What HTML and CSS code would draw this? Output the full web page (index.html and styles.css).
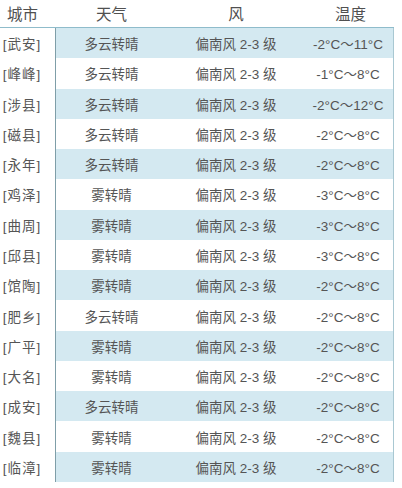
FILE: index.html
```html
<!DOCTYPE html>
<html lang="zh-CN">
<head>
<meta charset="utf-8">
<link rel="stylesheet" href="styles.css">
</head>
<body>
<div class="table">
  <div class="row head">
    <div class="c city">城市</div>
    <div class="c wea">天气</div>
    <div class="c wind">风</div>
    <div class="c temp">温度</div>
  </div>
  <div class="body">
    <div class="row alt"><div class="c city">[武安]</div><div class="c wea">多云转晴</div><div class="c wind">偏南风 2-3 级</div><div class="c temp">-2°C～11°C</div></div>
    <div class="row"><div class="c city">[峰峰]</div><div class="c wea">多云转晴</div><div class="c wind">偏南风 2-3 级</div><div class="c temp">-1°C～8°C</div></div>
    <div class="row alt"><div class="c city">[涉县]</div><div class="c wea">多云转晴</div><div class="c wind">偏南风 2-3 级</div><div class="c temp">-2°C～12°C</div></div>
    <div class="row"><div class="c city">[磁县]</div><div class="c wea">多云转晴</div><div class="c wind">偏南风 2-3 级</div><div class="c temp">-2°C～8°C</div></div>
    <div class="row alt"><div class="c city">[永年]</div><div class="c wea">多云转晴</div><div class="c wind">偏南风 2-3 级</div><div class="c temp">-2°C～8°C</div></div>
    <div class="row"><div class="c city">[鸡泽]</div><div class="c wea">雾转晴</div><div class="c wind">偏南风 2-3 级</div><div class="c temp">-3°C～8°C</div></div>
    <div class="row alt"><div class="c city">[曲周]</div><div class="c wea">雾转晴</div><div class="c wind">偏南风 2-3 级</div><div class="c temp">-3°C～8°C</div></div>
    <div class="row"><div class="c city">[邱县]</div><div class="c wea">雾转晴</div><div class="c wind">偏南风 2-3 级</div><div class="c temp">-3°C～8°C</div></div>
    <div class="row alt"><div class="c city">[馆陶]</div><div class="c wea">雾转晴</div><div class="c wind">偏南风 2-3 级</div><div class="c temp">-2°C～8°C</div></div>
    <div class="row"><div class="c city">[肥乡]</div><div class="c wea">多云转晴</div><div class="c wind">偏南风 2-3 级</div><div class="c temp">-2°C～8°C</div></div>
    <div class="row alt"><div class="c city">[广平]</div><div class="c wea">雾转晴</div><div class="c wind">偏南风 2-3 级</div><div class="c temp">-2°C～8°C</div></div>
    <div class="row"><div class="c city">[大名]</div><div class="c wea">雾转晴</div><div class="c wind">偏南风 2-3 级</div><div class="c temp">-2°C～8°C</div></div>
    <div class="row alt"><div class="c city">[成安]</div><div class="c wea">多云转晴</div><div class="c wind">偏南风 2-3 级</div><div class="c temp">-2°C～8°C</div></div>
    <div class="row"><div class="c city">[魏县]</div><div class="c wea">雾转晴</div><div class="c wind">偏南风 2-3 级</div><div class="c temp">-2°C～8°C</div></div>
    <div class="row alt"><div class="c city">[临漳]</div><div class="c wea">雾转晴</div><div class="c wind">偏南风 2-3 级</div><div class="c temp">-2°C～8°C</div></div>
  </div>
</div>
</body>
</html>
```
FILE: styles.css
```css
html, body {
  margin: 0;
  padding: 0;
  background: #ffffff;
}
body {
  font-family: "Liberation Sans", "Noto Sans CJK SC", sans-serif;
  color: #555555;
}
.table {
  width: 394px;
}
.row {
  display: grid;
  grid-template-columns: 56px 109px 142px 87px;
  height: 30.27px;
  font-size: 13.5px;
}
.row .c {
  display: flex;
  align-items: center;
  justify-content: center;
  box-sizing: border-box;
  white-space: nowrap;
}
.head {
  height: 28px;
  font-size: 15.5px;
  border-bottom: 1px solid #8fbccb;
  box-sizing: border-box;
  color: #505050;
}
.head .c {
  padding-bottom: 2px;
}
.city {
  padding-right: 11px;
}
.body .city {
  border-right: 1px solid #7f9ea8;
  background: #ffffff;
  letter-spacing: 1px;
}
.body .temp {
  border-right: 1px solid #a9c8d2;
  padding-right: 4px;
}
.wea {
  padding-left: 2px;
}
.alt .wea, .alt .wind, .alt .temp {
  background: #d4e9f1;
}
```
